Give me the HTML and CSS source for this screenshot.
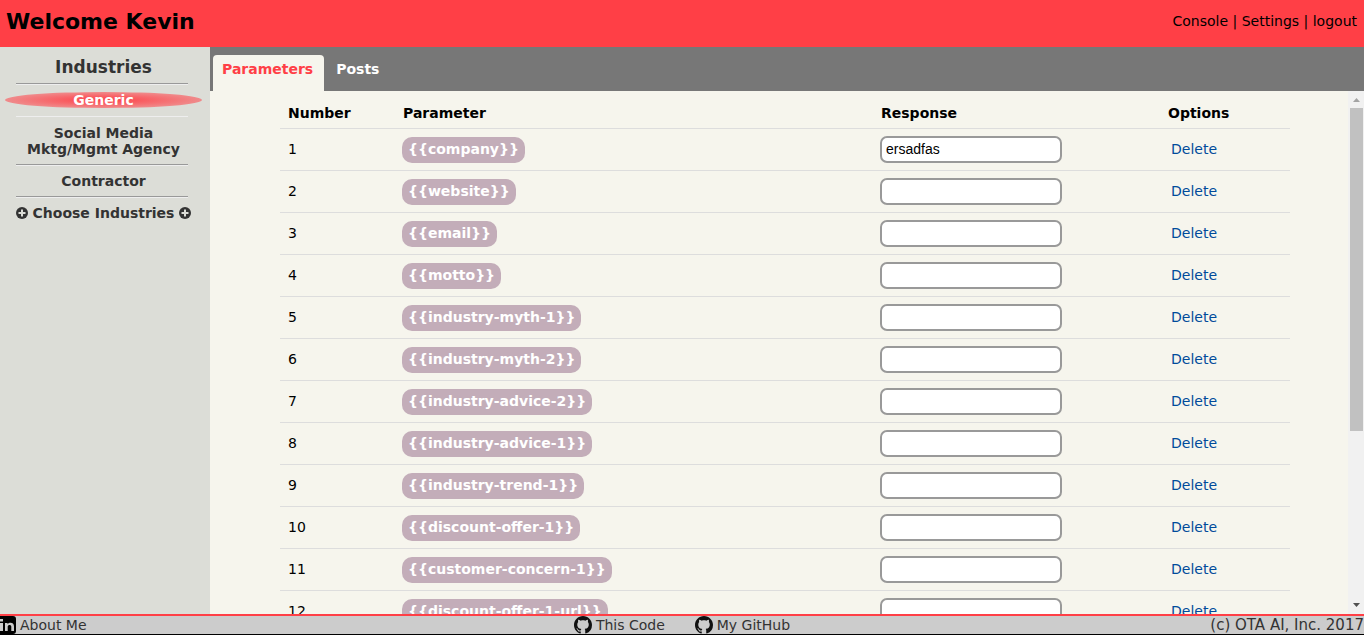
FILE: index.html
```html
<!DOCTYPE html>
<html lang="en">
<head>
<meta charset="utf-8">
<title>Console</title>
<link rel="stylesheet" href="styles.css">
</head>
<body>
<svg class="defs" aria-hidden="true">
  <symbol id="github" viewBox="0 0 16 16"><path fill-rule="evenodd" d="M8 0C3.58 0 0 3.58 0 8c0 3.54 2.29 6.53 5.47 7.59.4.07.55-.17.55-.38 0-.19-.01-.82-.01-1.49-2.01.37-2.53-.49-2.69-.94-.09-.23-.48-.94-.82-1.13-.28-.15-.68-.52-.01-.53.63-.01 1.08.58 1.23.82.72 1.21 1.87.87 2.33.66.07-.52.28-.87.51-1.07-1.78-.2-3.64-.89-3.64-3.95 0-.87.31-1.59.82-2.15-.08-.2-.36-1.02.08-2.12 0 0 .67-.21 2.2.82.64-.18 1.32-.27 2-.27s1.36.09 2 .27c1.53-1.04 2.2-.82 2.2-.82.44 1.1.16 1.92.08 2.12.51.56.82 1.27.82 2.15 0 3.07-1.87 3.75-3.65 3.95.29.25.54.73.54 1.48 0 1.07-.01 1.93-.01 2.2 0 .21.15.46.55.38A8.01 8.01 0 0 0 16 8c0-4.42-3.58-8-8-8z"/></symbol>
  <symbol id="plus" viewBox="0 0 12 12"><circle cx="6" cy="6" r="6"/><path d="M6 2.500v7M2.500 6h7" stroke="#dcddd7" stroke-width="2"/></symbol>
</svg>
<header class="topbar">
  <h1>Welcome Kevin</h1>
  <nav class="account"><a href="#">Console</a> | <a href="#">Settings</a> | <a href="#">logout</a></nav>
</header>
<div class="body">
  <aside class="sidebar">
    <h2>Industries</h2>
    <hr>
    <a class="industry active" href="#">Generic</a>
    <hr class="light">
    <a class="industry" href="#">Social Media Mktg/Mgmt Agency</a>
    <hr>
    <a class="industry" href="#">Contractor</a>
    <hr>
    <a class="industry choose" href="#"><svg class="plus"><use href="#plus"/></svg>Choose Industries<svg class="plus"><use href="#plus"/></svg></a>
  </aside>
  <main class="main">
    <nav class="tabs">
      <a class="tab selected" href="#">Parameters</a>
      <a class="tab" href="#">Posts</a>
    </nav>
    <div class="panel">
      <div class="view">
        <table class="params">
          <thead><tr><th class="c-num">Number</th><th class="c-param">Parameter</th><th class="c-resp">Response</th><th>Options</th></tr></thead>
          <tbody>
            <tr><td>1</td><td><span class="pill">{{company}}</span></td><td><input type="text" aria-label="company" value="ersadfas"></td><td><a class="delete" href="#">Delete</a></td></tr>
            <tr><td>2</td><td><span class="pill">{{website}}</span></td><td><input type="text" aria-label="website"></td><td><a class="delete" href="#">Delete</a></td></tr>
            <tr><td>3</td><td><span class="pill">{{email}}</span></td><td><input type="text" aria-label="email"></td><td><a class="delete" href="#">Delete</a></td></tr>
            <tr><td>4</td><td><span class="pill">{{motto}}</span></td><td><input type="text" aria-label="motto"></td><td><a class="delete" href="#">Delete</a></td></tr>
            <tr><td>5</td><td><span class="pill">{{industry-myth-1}}</span></td><td><input type="text" aria-label="industry-myth-1"></td><td><a class="delete" href="#">Delete</a></td></tr>
            <tr><td>6</td><td><span class="pill">{{industry-myth-2}}</span></td><td><input type="text" aria-label="industry-myth-2"></td><td><a class="delete" href="#">Delete</a></td></tr>
            <tr><td>7</td><td><span class="pill">{{industry-advice-2}}</span></td><td><input type="text" aria-label="industry-advice-2"></td><td><a class="delete" href="#">Delete</a></td></tr>
            <tr><td>8</td><td><span class="pill">{{industry-advice-1}}</span></td><td><input type="text" aria-label="industry-advice-1"></td><td><a class="delete" href="#">Delete</a></td></tr>
            <tr><td>9</td><td><span class="pill">{{industry-trend-1}}</span></td><td><input type="text" aria-label="industry-trend-1"></td><td><a class="delete" href="#">Delete</a></td></tr>
            <tr><td>10</td><td><span class="pill">{{discount-offer-1}}</span></td><td><input type="text" aria-label="discount-offer-1"></td><td><a class="delete" href="#">Delete</a></td></tr>
            <tr><td>11</td><td><span class="pill">{{customer-concern-1}}</span></td><td><input type="text" aria-label="customer-concern-1"></td><td><a class="delete" href="#">Delete</a></td></tr>
            <tr><td>12</td><td><span class="pill">{{discount-offer-1-url}}</span></td><td><input type="text" aria-label="discount-offer-1-url"></td><td><a class="delete" href="#">Delete</a></td></tr>
          </tbody>
        </table>
      </div>
      <div class="scrollbar" aria-hidden="true">
        <svg class="arrow up" viewBox="0 0 16 17"><path d="M5 11h7L8.500 7z"/></svg>
        <div class="track"><div class="thumb"></div></div>
        <svg class="arrow down" viewBox="0 0 16 17"><path d="M5 6h7L8.500 10z"/></svg>
      </div>
    </div>
  </main>
</div>
<footer class="footer">
  <a href="#"><svg class="linkedin" viewBox="0 0 16 18"><path d="M0 0h13q3 0 3 3v12q0 3-3 3H0z"/><path fill="#ccc" d="M0 7h3v8H0zM0 3h3v2.500H0zM5 7h2.500v1.200C8.500 6.500 14 5.600 14 10.500V15h-2.700v-4.200c0-2.500-3.600-2.200-3.600 0V15H5z"/></svg>About Me</a>
  <div class="center">
    <a href="#"><svg class="github"><use href="#github"/></svg>This Code</a>
    <a href="#"><svg class="github"><use href="#github"/></svg>My GitHub</a>
  </div>
  <span class="copy">(c) OTA AI, Inc. 2017</span>
</footer>
</body>
</html>
```
FILE: styles.css
```css
* { box-sizing: border-box; }

body {
  margin: 0;
  height: 100vh;
  display: flex;
  flex-direction: column;
  overflow: hidden;
  font: 14px/16px Verdana, "DejaVu Sans", sans-serif;
  color: #000;
}

a { color: inherit; text-decoration: none; }
svg { flex: none; }
.defs { position: absolute; width: 0; height: 0; }

.topbar {
  display: flex;
  justify-content: space-between;
  align-items: center;
  padding: 8px 7px 11px 6px;
  background: #ff3f46;
}
.topbar h1 { margin: 0; font-size: 22px; line-height: 28px; }
.account { padding-bottom: 3px; }

.body { flex: 1; min-height: 0; display: flex; }

.sidebar {
  width: 210px;
  flex: none;
  padding: 10px 8px 0 5px;
  background: #dcddd7;
  color: #333;
  font-weight: bold;
  text-align: center;
}
.sidebar h2 { margin: 0; font-size: 17px; line-height: 20px; }
.sidebar hr {
  height: 2px;
  margin: 7px 14px 7px 11px;
  border: 0;
  border-top: 1px solid #999;
  border-bottom: 1px solid #eee;
}
.sidebar h2 + hr { margin-top: 6px; }
.sidebar hr.light { margin-bottom: 8px; border-top-color: #dcddd7; }
.industry { display: block; padding: 0 14px; }
.industry.active {
  color: #fff;
  border-radius: 50%;
  background: radial-gradient(#ff3f46, #e9aaa8);
}
.choose { display: flex; justify-content: center; align-items: center; gap: 5px; padding: 0; }
.plus { width: 12px; height: 12px; fill: #333; }

.main { flex: 1; min-width: 0; display: flex; flex-direction: column; background: #f6f5ed; }
.tabs { display: flex; gap: 3px; padding: 8px 3px 0; background: #777; }
.tab { padding: 6px 11px 14px 9px; color: #fff; font-weight: bold; }
.tab.selected { color: #ff3f46; background: #f6f5ed; border-radius: 4px 4px 0 0; }

.panel { flex: 1; min-height: 0; display: flex; }
.view { flex: 1; overflow: hidden; padding: 0 58px 0 70px; }

.params { width: 100%; border-collapse: collapse; table-layout: fixed; }
.params th { height: 37px; padding: 7px 8px 0; text-align: left; }
.params td { height: 42px; padding: 0 7px; border-top: 1px solid #ddd; }
.params td:first-child { padding-left: 8px; }
.c-num { width: 115px; }
.c-param { width: 478px; }
.c-resp { width: 287px; }

.pill {
  display: block;
  width: fit-content;
  margin-top: 1px;
  padding: 4px 6px 6px;
  border-radius: 10px;
  background: #c3adb9;
  color: #fff;
  font-weight: bold;
}
.params input {
  display: block;
  width: 182px;
  height: 27px;
  padding: 0 4px;
  border: 2px solid #999;
  border-radius: 7px;
  background: #fff;
  font: 14px "Liberation Sans", Arial, sans-serif;
}
.delete { padding-left: 4px; color: #004b9b; }

.scrollbar { width: 16px; flex: none; display: flex; flex-direction: column; background: #f1f1f1; }
.arrow { width: 16px; height: 17px; }
.up { fill: #a3a3a3; }
.down { fill: #505050; }
.track { flex: 1; padding: 0 1px 0 2px; }
.thumb { height: 66%; background: #c1c1c1; }

.footer {
  display: grid;
  grid-template-columns: 1fr auto 1fr;
  border-top: 2px solid #ff3f46;
  border-bottom: 1px solid #000;
  background: #ccc;
  color: #333;
  line-height: 18px;
}
.footer a { display: flex; gap: 4px; }
.footer .center { display: flex; gap: 30px; }
.linkedin { width: 16px; height: 18px; fill: #000; }
.github { width: 18px; height: 18px; fill: #111; }
.copy { font-size: 15px; text-align: right; }
```
